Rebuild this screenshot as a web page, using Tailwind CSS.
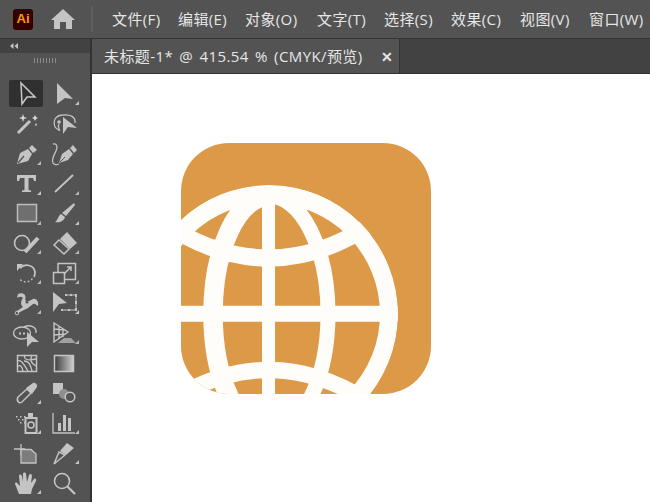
<!DOCTYPE html>
<html lang="en">
<head>
    <meta charset="UTF-8">
    <title>Illustrator</title>
    <script src="https://cdn.jsdelivr.net/npm/@tailwindcss/browser@4"></script>
</head>
<body class="w-[650px] h-[502px] overflow-hidden bg-white font-['Open_Sans','Noto_Sans_CJK_SC',sans-serif]">
    <!-- Menu bar -->
    <header class="h-[39px] bg-[#535353] border-b border-[#333333] flex items-center text-[15px] text-[#e6e6e6]">
        <div class="ml-[13px] w-[20px] h-[21px] rounded-[3px] bg-[#330000] text-[#ff9a00] text-[13px] font-bold font-['Liberation_Sans',sans-serif] flex items-center justify-center">Ai</div>
        <svg class="ml-[17px] w-[26px] h-[22px]" viewBox="0 0 26 22"><path fill="#c4c4c4" d="M13 1 L25 12 L22 12 L22 21 L16 21 L16 14 L10 14 L10 21 L4 21 L4 12 L1 12 Z"/></svg>
        <div class="ml-[15px] w-[2px] h-[26px] bg-[#5e5e5e]"></div>
        <nav class="ml-[19px] flex whitespace-nowrap tracking-[0.4px]">
            <span class="w-[66px]">文件(F)</span>
            <span class="w-[67px]">编辑(E)</span>
            <span class="w-[72px]">对象(O)</span>
            <span class="w-[67px]">文字(T)</span>
            <span class="w-[67px]">选择(S)</span>
            <span class="w-[69px]">效果(C)</span>
            <span class="w-[69px]">视图(V)</span>
            <span>窗口(W)</span>
        </nav>
    </header>

    <div class="flex h-[463px]">
        <!-- Tools panel -->
        <aside class="w-[92px] shrink-0 bg-[#535353] border-r-2 border-[#333333]">
            <div class="h-[14px] bg-[#424242] flex items-center pl-[10px]">
                <svg class="w-[8px] h-[6px]" viewBox="0 0 8 6"><path fill="#c4c4c4" d="M3.5 0 L3.5 6 L0 3 Z M8 0 L8 6 L4.500 3 Z"/></svg>
            </div>
            <div class="h-[27px] pt-[5px] flex justify-center gap-[2px]">
                <i class="w-[1px] h-[5px] bg-[#8a8a8a]"></i><i class="w-[1px] h-[5px] bg-[#8a8a8a]"></i><i class="w-[1px] h-[5px] bg-[#8a8a8a]"></i><i class="w-[1px] h-[5px] bg-[#8a8a8a]"></i><i class="w-[1px] h-[5px] bg-[#8a8a8a]"></i><i class="w-[1px] h-[5px] bg-[#8a8a8a]"></i><i class="w-[1px] h-[5px] bg-[#8a8a8a]"></i><i class="w-[1px] h-[5px] bg-[#8a8a8a]"></i>
            </div>
            <div class="relative ml-[8px] grid grid-cols-[38px_38px] auto-rows-[29.9px] justify-items-center items-center">
                <div class="absolute left-[1px] top-0 w-[34px] h-[27px] rounded-[2px] bg-[#303030]"></div>

                <!-- selection / direct selection -->
                <svg class="relative w-[30px] h-[30px]" viewBox="0 0 30 30"><path fill="none" stroke="#c8c8c8" stroke-width="1.5" d="M9 3 L23 17 L15 17 L10 24 Z"/></svg>
                <svg class="w-[30px] h-[30px]" viewBox="0 0 30 30"><path fill="#c4c4c4" d="M7 3 L23 19 L15 18 L7 24 Z M29 21 V25 H25 Z"/></svg>
                <!-- wand / lasso -->
                <svg class="w-[30px] h-[30px]" viewBox="0 0 30 30"><path stroke="#c4c4c4" stroke-width="3" d="M6 23 L18 11"/><path fill="#d8d8d8" d="M11 4 L12 7 L15 8 L12 9 L11 12 L10 9 L7 8 L10 7 Z M23 5 L24 7 L26 8 L24 9 L23 11 L22 9 L20 8 L22 7 Z M24 13 L25 15 L24 16 L23 15 Z"/></svg>
                <svg class="w-[30px] h-[30px]" viewBox="0 0 30 30"><path fill="none" stroke="#c4c4c4" stroke-width="1.300" d="M13 5 C20 4 26 7 25 13 M10 20 C4 19 3 13 5 9 C7 6 10 5 13 5"/><circle cx="9" cy="12" r="1.800" fill="#c4c4c4"/><path fill="none" stroke="#c4c4c4" stroke-width="1.300" d="M9 14 C7 17 10 18 9 21"/><path fill="#c4c4c4" d="M13 7 L27 18 L18 17 L13 24 Z"/></svg>
                <!-- pen / curvature -->
                <svg class="w-[30px] h-[30px]" viewBox="0 0 30 30"><path fill="#c4c4c4" d="M5 24 L8 13 L16 9 L20 14 L16 21 Z M17 8 L20 5 L25 10 L21 13 Z"/><path stroke="#535353" stroke-width="1.200" d="M6 23 L12 16"/><path fill="#b8b8b8" d="M29 21 V25 H25 Z"/></svg>
                <svg class="w-[30px] h-[30px]" viewBox="0 0 30 30"><path fill="#c4c4c4" d="M9 23 L12 14 L19 9 L23 14 L18 20 Z M20 8 L23 5 L27 10 L24 13 Z"/><path stroke="#535353" stroke-width="1" d="M10 22 L15 17"/><path fill="none" stroke="#c4c4c4" stroke-width="1.300" d="M3 4 C7 3 8 7 6 11 C4 15 1 20 3 23 C4 25 7 25 9 24"/></svg>
                <!-- type / line -->
                <svg class="w-[30px] h-[30px]" viewBox="0 0 30 30"><path fill="#c4c4c4" d="M5 5 H24 V11 H22 L21 8 H16.500 V20 L19 20.500 V22 H10 V20.500 L12.500 20 V8 H8 L7 11 H5 Z M29 21 V25 H25 Z"/></svg>
                <svg class="w-[30px] h-[30px]" viewBox="0 0 30 30"><path stroke="#c4c4c4" stroke-width="1.800" d="M5 22 L23 5"/><path fill="#b8b8b8" d="M29 21 V25 H25 Z"/></svg>
                <!-- rectangle / brush -->
                <svg class="w-[30px] h-[30px]" viewBox="0 0 30 30"><rect x="5.500" y="4.500" width="19" height="17" fill="#6f6f6f" stroke="#bdbdbd" stroke-width="1.500"/><path fill="#b8b8b8" d="M29 21 V25 H25 Z"/></svg>
                <svg class="w-[30px] h-[30px]" viewBox="0 0 30 30"><path fill="#c4c4c4" d="M24 3 L25 5 L16 16 L12 13 Z M11 14 L15 17 C14 21 10 23 5 22 C8 20 8 16 11 14 Z M29 21 V25 H25 Z"/></svg>
                <!-- shaper / eraser -->
                <svg class="w-[30px] h-[30px]" viewBox="0 0 30 30"><circle cx="10" cy="14" r="7.500" fill="none" stroke="#c4c4c4" stroke-width="1.600"/><path stroke="#c4c4c4" stroke-width="4" d="M13 23 L26 9"/><path fill="#b8b8b8" d="M29 21 V25 H25 Z"/></svg>
                <svg class="w-[30px] h-[30px]" viewBox="0 0 30 30"><path fill="#c4c4c4" d="M10 10 L17 3 L27 14 L20 20 Z"/><path fill="none" stroke="#c4c4c4" stroke-width="1.500" d="M9 11 L4 16 L14 25 L19 20 Z"/><path fill="#b8b8b8" d="M29 21 V25 H25 Z"/></svg>
                <!-- rotate / scale -->
                <svg class="w-[30px] h-[30px]" viewBox="0 0 30 30"><path fill="none" stroke="#c4c4c4" stroke-width="1.800" d="M8 9 C13 4 22 6 23 13 C23 15 23 16 22 18"/><path fill="#c4c4c4" d="M5 5 L11 5 L5 12 Z"/><path fill="none" stroke="#c4c4c4" stroke-width="1.500" stroke-linecap="round" stroke-dasharray="0.500 3.500" d="M20 20 C17 24 10 24 7 19"/><path fill="#b8b8b8" d="M29 21 V25 H25 Z"/></svg>
                <svg class="w-[30px] h-[30px]" viewBox="0 0 30 30"><path fill="none" stroke="#c4c4c4" stroke-width="1.500" d="M3.500 13.500 H14.500 V24.500 H3.500 Z M8 13 V4.500 H25.500 V20.500 H15"/><path fill="none" stroke="#c4c4c4" stroke-width="1.500" d="M14 15 L21 8 M17 8 H21 V12"/><path fill="#b8b8b8" d="M29 21 V25 H25 Z"/></svg>
                <!-- width / free transform -->
                <svg class="w-[30px] h-[30px]" viewBox="0 0 30 30"><path fill="#c4c4c4" d="M6 5 C11 3 15 6 13 11 C15 13 18 12 21 10 C25 9 27 14 26 17 L23 15 C20 14 18 19 14 20 L6 24 L5 22 L11 18 C8 16 9 11 11 9 C9 7 7 8 5 9 Z"/><circle cx="5" cy="24" r="1.800" fill="none" stroke="#c4c4c4"/><circle cx="15" cy="13" r="1.500" fill="#535353"/><path fill="#b8b8b8" d="M29 21 V25 H25 Z"/></svg>
                <svg class="w-[30px] h-[30px]" viewBox="0 0 30 30"><path fill="none" stroke="#c4c4c4" stroke-width="1" d="M16 6 H26 V21 H11"/><path fill="#c4c4c4" d="M3 3 L17 14 L9 15 L3 23 Z M15 5 h2 v2 h-2 Z M20 5 h2 v2 h-2 Z M25 5 h2 v3 h-2 Z M25 12 h2 v3 h-2 Z M25 19 h2 v3 h-2 Z M18 20 h2 v2 h-2 Z M11 20 h2 v2 h-2 Z M29 21 V25 H25 Z"/></svg>
                <!-- shape builder / perspective grid -->
                <svg class="w-[30px] h-[30px]" viewBox="0 0 30 30"><ellipse cx="10" cy="14" rx="8.500" ry="6" fill="none" stroke="#c4c4c4" stroke-width="1.400"/><path fill="none" stroke="#c4c4c4" stroke-width="1.400" d="M12 8 C18 5 25 8 24 14"/><path fill="#c4c4c4" d="M7 13.500 h2 v2 h-2 Z M11 13.500 h2 v2 h-2 Z M15 13 L27 23 L20 23 L15 28 Z"/></svg>
                <svg class="w-[30px] h-[30px]" viewBox="0 0 30 30"><path fill="none" stroke="#c4c4c4" stroke-width="1.400" d="M4 4 L18 13 L4 23 Z M4 10 L15 11 M4 16 L16 15 M9 7 V20 M13 10 V18"/><path fill="#a0a0a0" d="M14 19 H21 L26 24 H8 Z"/><path fill="#b8b8b8" d="M29 21 V25 H25 Z"/></svg>
                <!-- mesh / gradient -->
                <svg class="w-[30px] h-[30px]" viewBox="0 0 30 30"><rect x="5.500" y="6.500" width="19" height="16" fill="none" stroke="#c4c4c4" stroke-width="1.500"/><path fill="none" stroke="#c4c4c4" stroke-width="1.300" d="M5 12 C10 10 12 16 16 22 M5 18 C8 15 10 17 11 22 M13 6 C11 10 15 12 24 10 M20 6 C18 10 18 14 24 17 M12 12 C16 12 18 14 20 22"/></svg>
                <svg class="w-[30px] h-[30px]" viewBox="0 0 30 30"><defs><linearGradient id="grad"><stop offset="0" stop-color="#3d3d3d"/><stop offset="1" stop-color="#cfcfcf"/></linearGradient></defs><rect x="4.500" y="6.500" width="19" height="16" fill="url(#grad)" stroke="#c4c4c4" stroke-width="1.500"/></svg>
                <!-- eyedropper / blend -->
                <svg class="w-[30px] h-[30px]" viewBox="0 0 30 30"><path fill="none" stroke="#c4c4c4" stroke-width="1.500" d="M6 18 L15 10 L19 14 L10 23 C7 25 4 22 6 18 Z"/><path fill="#c4c4c4" d="M14 9 L21 4 C23 3 26 6 25 8 L20 15 Z M29 21 V25 H25 Z"/></svg>
                <svg class="w-[30px] h-[30px]" viewBox="0 0 30 30"><rect x="3" y="4" width="10" height="11" fill="#c4c4c4"/><circle cx="14" cy="15" r="5" fill="#8f8f8f"/><circle cx="20" cy="18" r="4.800" fill="#535353" stroke="#c4c4c4" stroke-width="1.500"/></svg>
                <!-- symbol sprayer / graph -->
                <svg class="w-[30px] h-[30px]" viewBox="0 0 30 30"><path fill="#c4c4c4" d="M4 7 h1.500 v1.500 h-1.500 Z M8 7 h1.500 v1.500 h-1.500 Z M12 7 h1.500 v1.500 h-1.500 Z M6 10 h1.500 v1.500 h-1.500 Z M10 10 h1.500 v1.500 h-1.500 Z M8 13 h1.500 v1.500 h-1.500 Z M12 13 h1.500 v1.500 h-1.500 Z M16 4 h5 v4 h-5 Z M29 21 V25 H25 Z"/><rect x="13.500" y="9" width="11" height="15" fill="none" stroke="#c4c4c4" stroke-width="2"/><circle cx="19" cy="16" r="3" fill="none" stroke="#c4c4c4" stroke-width="1.500"/></svg>
                <svg class="w-[30px] h-[30px]" viewBox="0 0 30 30"><path fill="none" stroke="#c4c4c4" stroke-width="1.300" d="M3 4 V24 H25"/><path fill="#c4c4c4" d="M8 14 h3 v8 h-3 Z M13 6 h3 v16 h-3 Z M18 9 h3 v13 h-3 Z M29 21 V25 H25 Z"/></svg>
                <!-- artboard / slice -->
                <svg class="w-[30px] h-[30px]" viewBox="0 0 30 30"><path fill="none" stroke="#c4c4c4" stroke-width="1.300" d="M2 10 H13 M9 5 V16"/><path fill="#7d7d7d" stroke="#c4c4c4" stroke-width="1.300" d="M9 10.500 H19 L24 15 V24 H9 Z"/></svg>
                <svg class="w-[30px] h-[30px]" viewBox="0 0 30 30"><path fill="none" stroke="#c4c4c4" stroke-width="1.500" d="M4 25 L9 13 L15 16 Z"/><path fill="#c4c4c4" d="M10 12 L17 4 L24 9 L16 16 Z M29 21 V25 H25 Z"/></svg>
                <!-- hand / zoom -->
                <svg class="w-[30px] h-[30px]" viewBox="0 0 30 30"><path fill="#c4c4c4" d="M7 25 L3 15 C3 13 5 13 6 15 L8 17 L7 7 C7 5 9 5 10 7 L11 13 L11 5 C11 3 14 3 14 5 L15 13 L17 6 C18 4 20 5 20 7 L19 14 L22 10 C23 9 25 10 24 12 L20 20 L19 25 Z M29 21 V25 H25 Z"/></svg>
                <svg class="w-[30px] h-[30px]" viewBox="0 0 30 30"><circle cx="12" cy="12" r="7.500" fill="none" stroke="#c4c4c4" stroke-width="1.600"/><path stroke="#c4c4c4" stroke-width="2.200" d="M17.500 17.500 L25 25"/></svg>
            </div>
        </aside>

        <div class="flex-1 flex flex-col">
            <!-- Document tab -->
            <div class="h-[35px] shrink-0 bg-[#424242] border-b border-[#333333]">
                <div class="w-[308px] h-[34px] bg-[#535353] border-r border-[#333333] pl-[12px] flex items-center text-[15px] text-[#e6e6e6] whitespace-nowrap">
                    <span class="tracking-[0.4px] [word-spacing:2px]">未标题-1* @ 415.54 % (CMYK/预览)</span>
                    <span class="ml-auto mr-[6px] text-[14px] font-bold">✕</span>
                </div>
            </div>
            <!-- Artboard -->
            <div class="flex-1 bg-white pl-[89px] pt-[69px]">
                <svg class="w-[250px] h-[251px]" viewBox="181 143 250 251">
                    <defs>
                        <clipPath id="badge"><rect x="181" y="143" width="250" height="251" rx="48"/></clipPath>
                        <clipPath id="globe"><circle cx="269" cy="314" r="129"/></clipPath>
                    </defs>
                    <rect x="181" y="143" width="250" height="251" rx="48" fill="#dc9948"/>
                    <g clip-path="url(#badge)">
                        <g clip-path="url(#globe)" fill="none" stroke="#fffdf9">
                            <circle cx="269" cy="314" r="120" stroke-width="18"/>
                            <path d="M269 196 A56 118 0 0 0 269 432" stroke-width="19.500"/>
                            <path d="M269 196 A59 118 0 0 1 269 432" stroke-width="15"/>
                            <path d="M268.500 190 V440" stroke-width="13"/>
                            <path d="M140 313.700 H398" stroke-width="16"/>
                            <path d="M165 224 Q269 292 372 224" stroke-width="17"/>
                            <path d="M165 404 Q269 336 372 404" stroke-width="16"/>
                        </g>
                    </g>
                </svg>
            </div>
        </div>
    </div>
</body>
</html>
